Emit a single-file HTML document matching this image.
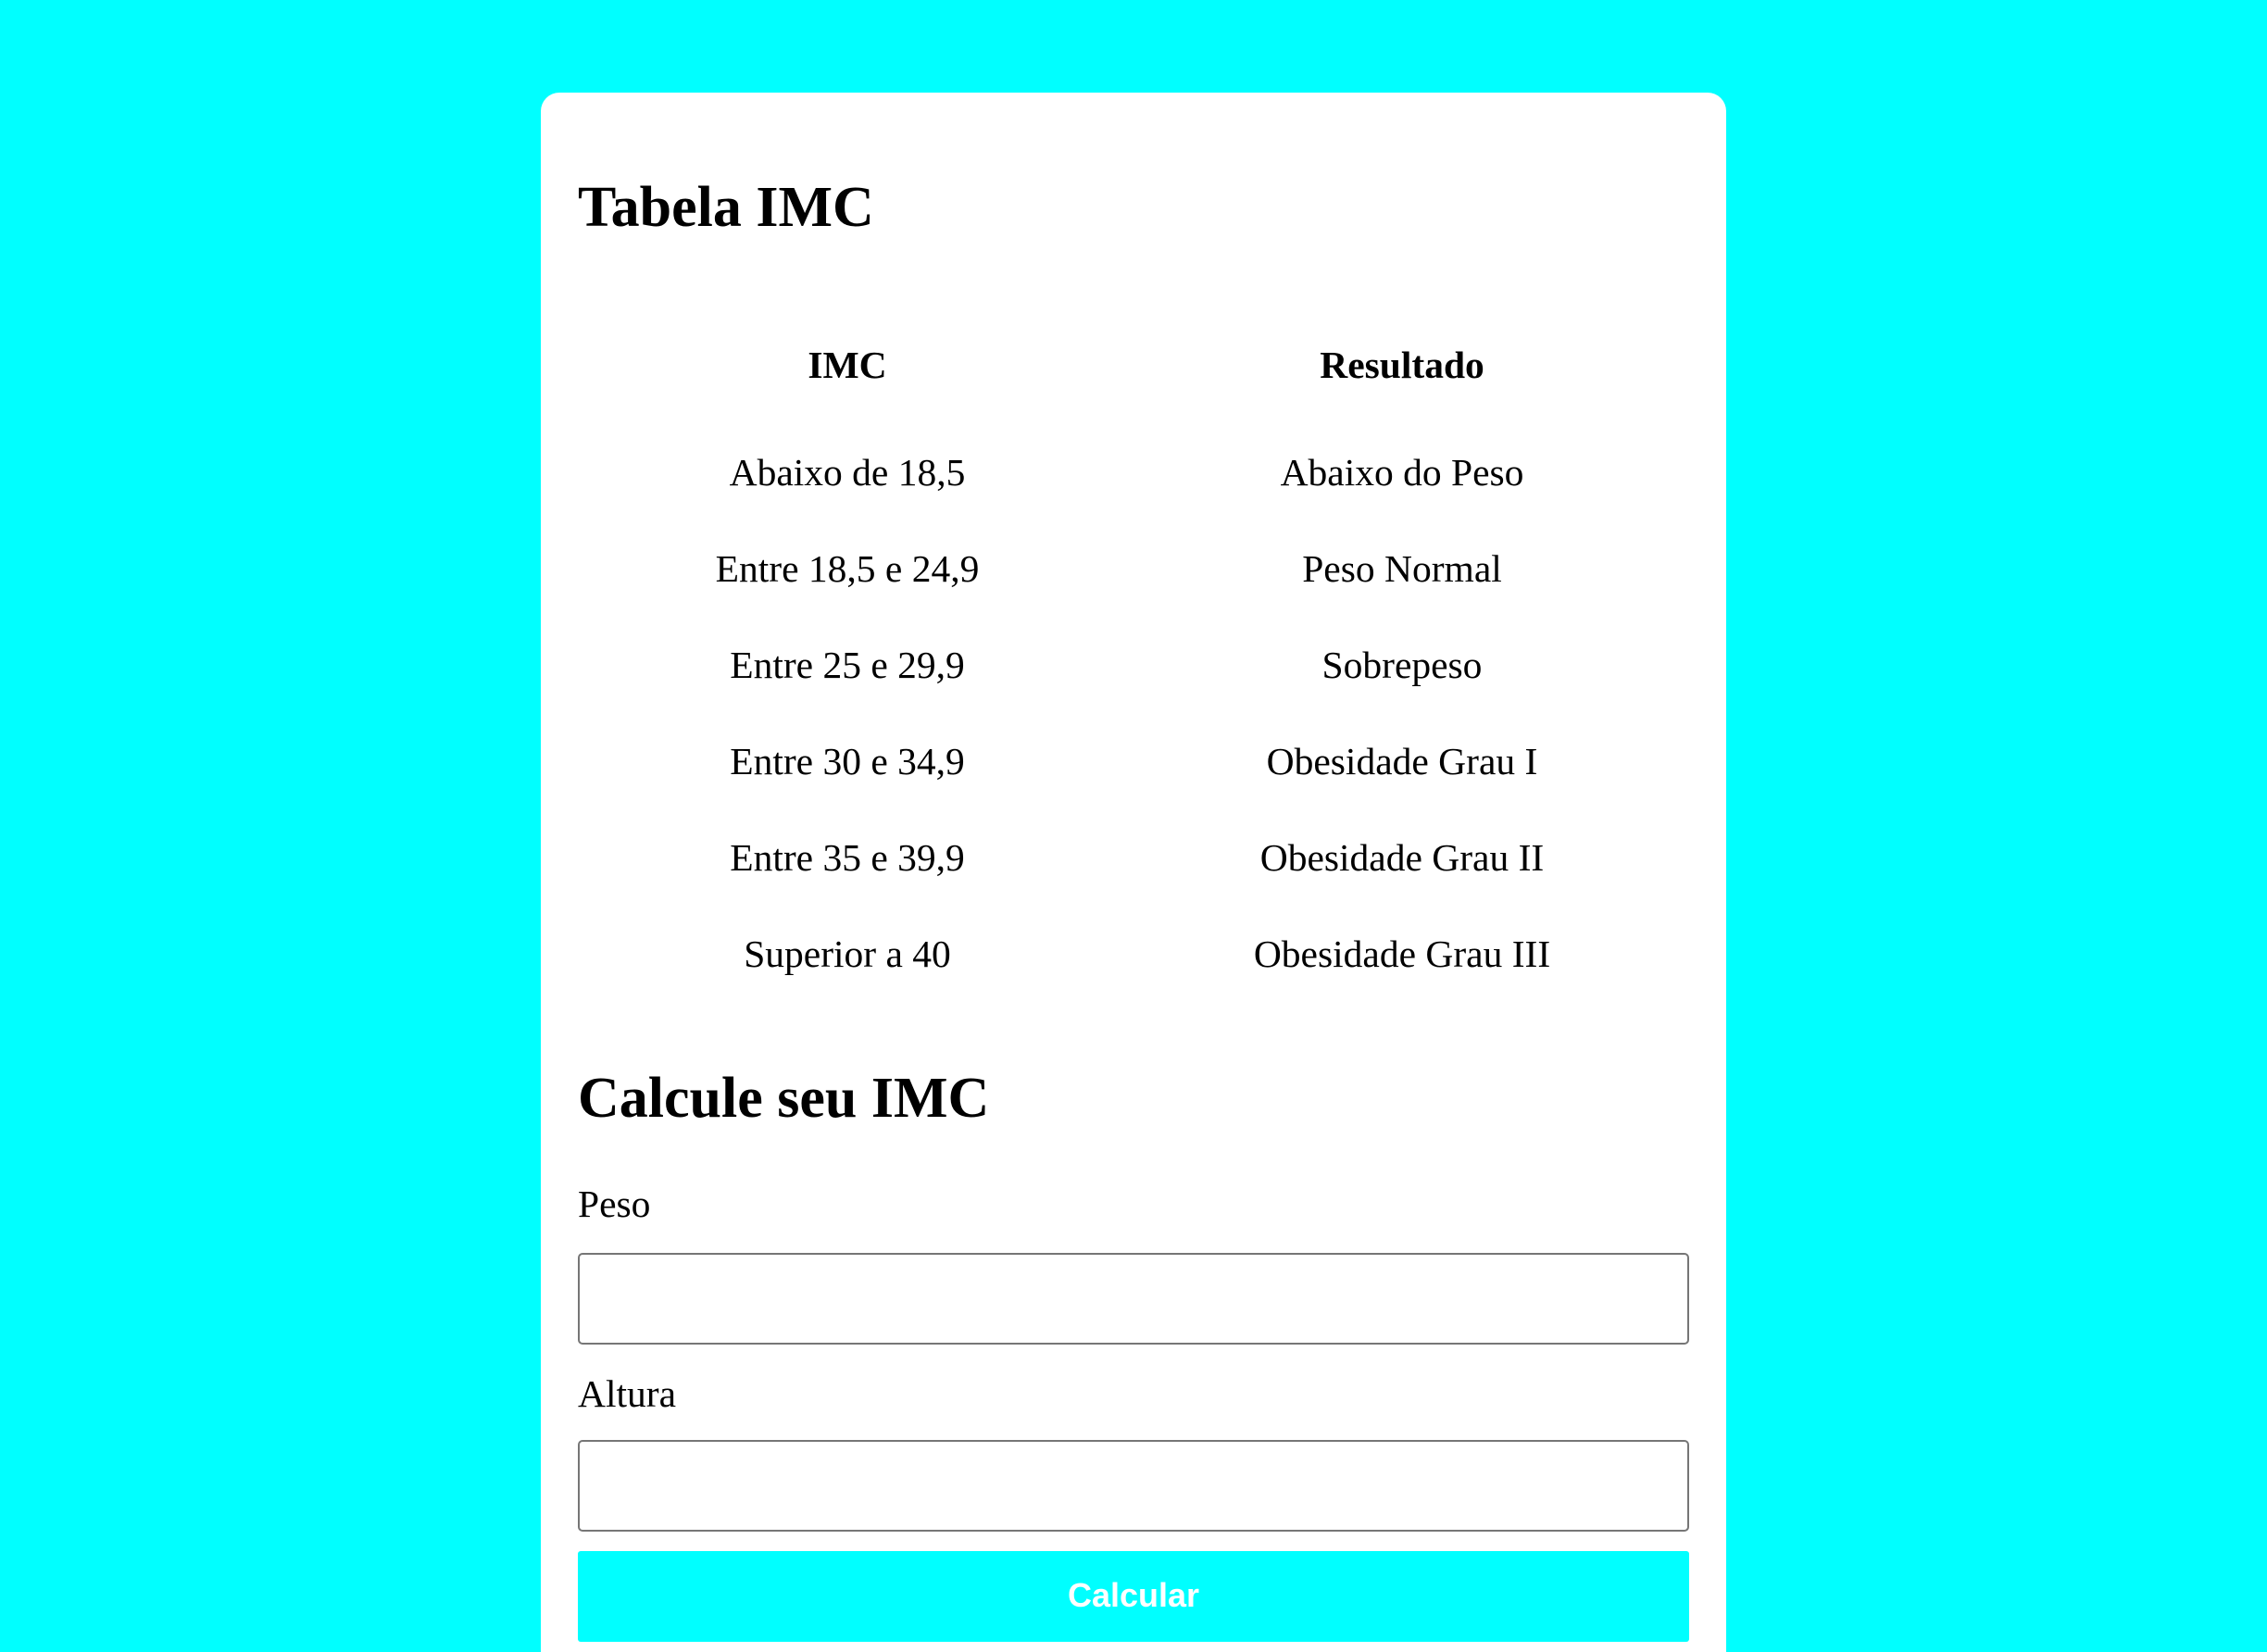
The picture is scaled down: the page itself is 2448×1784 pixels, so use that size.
<!DOCTYPE html>
<html><head><meta charset="utf-8"><style>
html,body{margin:0;padding:0;background:#00ffff;width:2448px;height:1784px;overflow:hidden;font-family:"Liberation Serif",serif;color:#000}
.card{position:absolute;left:584px;top:100px;width:1280px;height:1684px;background:#fff;border-radius:20px 20px 0 0}
.t{position:absolute;white-space:nowrap;line-height:60px;height:60px;font-size:41.5px}
.c1{width:600px;text-align:center;left:615px}
.c2{left:1214px;width:600px;text-align:center}
h1,h2{margin:0;position:absolute;left:624px;font-size:62px;font-weight:bold;line-height:80px;white-space:nowrap}
.inp{position:absolute;left:624px;width:1196px;height:95px;border:2px solid #767676;border-radius:5px;background:#fff}
.btn{position:absolute;left:624px;width:1200px;top:1675px;height:98px;background:#00ffff;color:#fff;font-family:"Liberation Sans",sans-serif;font-weight:bold;font-size:36px;line-height:96px;text-align:center;border-radius:3px}
</style></head><body>
<div class="card"></div>
<h1 style="top:184px">Tabela IMC</h1>
<div class="t c1" style="top:364px;font-weight:bold">IMC</div>
<div class="t c2" style="top:364px;font-weight:bold">Resultado</div>
<div class="t c1" style="top:480px">Abaixo de 18,5</div><div class="t c2" style="top:480px">Abaixo do Peso</div>
<div class="t c1" style="top:584px">Entre 18,5 e 24,9</div><div class="t c2" style="top:584px">Peso Normal</div>
<div class="t c1" style="top:688px">Entre 25 e 29,9</div><div class="t c2" style="top:688px">Sobrepeso</div>
<div class="t c1" style="top:792px">Entre 30 e 34,9</div><div class="t c2" style="top:792px">Obesidade Grau I</div>
<div class="t c1" style="top:896px">Entre 35 e 39,9</div><div class="t c2" style="top:896px">Obesidade Grau II</div>
<div class="t c1" style="top:1000px">Superior a 40</div><div class="t c2" style="top:1000px">Obesidade Grau III</div>
<h2 style="top:1146px">Calcule seu IMC</h2>
<div class="t" style="left:624px;top:1270px">Peso</div>
<div class="inp" style="top:1353px"></div>
<div class="t" style="left:624px;top:1475px">Altura</div>
<div class="inp" style="top:1555px"></div>
<div class="btn">Calcular</div>
</body></html>
